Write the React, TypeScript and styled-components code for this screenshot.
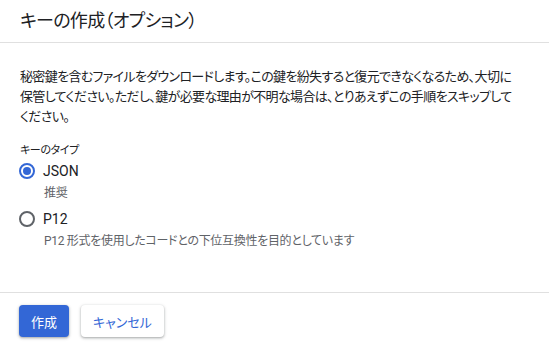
import React, { useState } from "react";
import styled, { createGlobalStyle } from "styled-components";

const GlobalStyle = createGlobalStyle`
  html, body {
    margin: 0;
    padding: 0;
    background: #ffffff;
  }
  body {
    font-family: Roboto, "Noto Sans CJK JP", "Noto Sans", sans-serif;
    color: #202124;
    -webkit-font-smoothing: antialiased;
  }
`;

const Dialog = styled.div`
  width: 549px;
  height: 349px;
  display: flex;
  flex-direction: column;
  background: #fff;
  font-feature-settings: "palt";
`;

const Header = styled.div`
  height: 42px;
  display: flex;
  align-items: center;
  padding: 0 20px;
  border-bottom: 1px solid #e0e0e0;
`;

const Title = styled.h2`
  margin: 0;
  font-size: 18px;
  font-weight: 400;
  line-height: 24px;
  color: #202124;
  letter-spacing: -0.7px;
`;

const Body = styled.div`
  flex: 1;
  padding: 24px 8px 0 20px;
`;

const Description = styled.p`
  margin: 0;
  font-size: 13px;
  line-height: 20px;
  letter-spacing: -0.65px;
  white-space: nowrap;
  color: #202124;
`;

const FieldLabel = styled.div`
  margin-top: 16px;
  font-size: 11px;
  line-height: 16px;
  letter-spacing: -0.4px;
  color: #202124;
`;

const RadioGroup = styled.div`
  display: flex;
  flex-direction: column;
`;

const Option = styled.div<{ $gap?: number }>`
  display: flex;
  flex-direction: column;
  margin-top: ${({ $gap }) => $gap ?? 0}px;
`;

const RadioRow = styled.label`
  display: flex;
  align-items: center;
  height: 24px;
  cursor: pointer;
`;

const RadioCircle = styled.span<{ $checked: boolean }>`
  box-sizing: border-box;
  width: 16px;
  height: 16px;
  margin-left: -1px;
  border-radius: 50%;
  border: 2px solid ${({ $checked }) => ($checked ? "#3367d6" : "#5f6368")};
  display: flex;
  align-items: center;
  justify-content: center;
  flex-shrink: 0;

  &::after {
    content: "";
    width: 8px;
    height: 8px;
    border-radius: 50%;
    background: #3367d6;
    display: ${({ $checked }) => ($checked ? "block" : "none")};
  }
`;

const RadioText = styled.span`
  margin-left: 8px;
  font-size: 14px;
  font-weight: 400;
  color: #202124;
`;

const Hint = styled.div`
  margin-left: 24px;
  margin-top: 2px;
  font-size: 12px;
  line-height: 16px;
  letter-spacing: -0.3px;
  color: #5f6368;
`;

const Footer = styled.div`
  display: flex;
  align-items: center;
  gap: 12px;
  padding: 12px 19px;
  border-top: 1px solid #e0e0e0;
`;

const Button = styled.button<{ $primary?: boolean }>`
  height: 32px;
  padding: 0 12px;
  border: none;
  border-radius: 4px;
  font-family: inherit;
  font-feature-settings: "palt";
  font-size: 13px;
  font-weight: 400;
  cursor: pointer;
  background: ${({ $primary }) => ($primary ? "#3367d6" : "#ffffff")};
  color: ${({ $primary }) => ($primary ? "#ffffff" : "#3367d6")};
  box-shadow: 0 1px 2px rgba(60, 64, 67, 0.3), 0 1px 3px 1px rgba(60, 64, 67, 0.15);
`;

const options = [
  { value: "json", label: "JSON", hint: "推奨" },
  { value: "p12", label: "P12", hint: "P12 形式を使用したコードとの下位互換性を目的としています" },
];

export default function App() {
  const [keyType, setKeyType] = useState("json");

  return (
    <>
      <GlobalStyle />
      <Dialog>
        <Header>
          <Title>キーの作成（オプション）</Title>
        </Header>
        <Body>
          <Description>
            秘密鍵を含むファイルをダウンロードします。この鍵を紛失すると復元できなくなるため、大切に
            <br />
            保管してください。ただし、鍵が必要な理由が不明な場合は、とりあえずこの手順をスキップして
            <br />
            ください。
          </Description>
          <FieldLabel>キーのタイプ</FieldLabel>
          <RadioGroup>
            {options.map((o, i) => (
              <Option key={o.value} $gap={i === 0 ? 0 : 6}>
                <RadioRow onClick={() => setKeyType(o.value)}>
                  <RadioCircle $checked={keyType === o.value} />
                  <RadioText>{o.label}</RadioText>
                </RadioRow>
                <Hint>{o.hint}</Hint>
              </Option>
            ))}
          </RadioGroup>
        </Body>
        <Footer>
          <Button $primary>作成</Button>
          <Button>キャンセル</Button>
        </Footer>
      </Dialog>
    </>
  );
}
